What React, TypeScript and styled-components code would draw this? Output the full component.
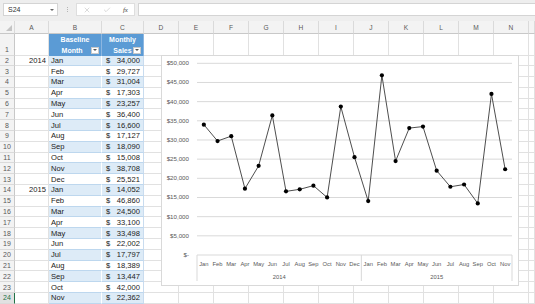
import React from "react";
import styled, { createGlobalStyle, css } from "styled-components";
import { X, Check } from "lucide-react";

const GlobalStyle = createGlobalStyle`
  html, body { margin: 0; padding: 0; background: #fff; overflow: hidden; }
  body { font-family: "Liberation Sans", Arial, sans-serif; }
  * { box-sizing: border-box; }
`;

const Page = styled.div`
  width: 535px;
  height: 304px;
  overflow: hidden;
  display: flex;
  flex-direction: column;
`;

const TopBar = styled.div`
  height: 21px;
  flex: none;
  background: #eeeeee;
  display: flex;
  align-items: flex-start;
  padding: 3px 0 0 3px;
`;

const NameBox = styled.div`
  width: 55px;
  height: 13px;
  background: #fff;
  border: 1px solid #d4d4d4;
  display: flex;
  align-items: center;
  justify-content: space-between;
  padding: 0 3px 0 4px;
  font-size: 7px;
  color: #333;
`;

const Caret = styled.span`
  width: 0;
  height: 0;
  border-left: 2px solid transparent;
  border-right: 2px solid transparent;
  border-top: 2.5px solid #666;
`;

const Dots = styled.div`
  width: 18px;
  height: 13px;
  display: flex;
  flex-direction: column;
  align-items: center;
  justify-content: center;
  gap: 1px;
`;

const Dot = styled.span`
  width: 1px;
  height: 1px;
  background: #b5b5b5;
`;

const FxGroup = styled.div`
  width: 59px;
  height: 13px;
  background: #fff;
  border: 1px solid #dedede;
  display: flex;
  align-items: center;
  justify-content: space-around;
  color: #b4b4b4;
`;

const Fx = styled.span`
  font-family: "Liberation Serif", serif;
  font-style: italic;
  font-size: 7px;
  color: #444;
`;

const FormulaInput = styled.div`
  flex: 1;
  height: 13px;
  margin-left: 3px;
  background: #fff;
  border: 1px solid #d4d4d4;
  border-right: none;
`;

const Sheet = styled.div`
  position: relative;
  flex: 1;
  display: grid;
  grid-template-columns: 15px 34px 53px 42px repeat(11, 35px) 1fr;
  grid-template-rows: 13px 21.5px repeat(23, 10.8px);
  font-size: 7.6px;
  color: #222;
`;

const ColHead = styled.div<{ $corner?: boolean }>`
  position: relative;
  background: #f3f3f3;
  border-right: 1px solid #dadada;
  border-bottom: 1px solid #c8c8c8;
  color: #595959;
  font-size: 6.6px;
  display: flex;
  align-items: center;
  justify-content: center;
  ${(p) =>
    p.$corner &&
    css`
      &::after {
        content: "";
        position: absolute;
        right: 2px;
        bottom: 2px;
        width: 0;
        height: 0;
        border-left: 6px solid transparent;
        border-bottom: 6px solid #c4c4c4;
      }
    `}
`;

const RowHead = styled.div<{ $bottom?: boolean; $active?: boolean }>`
  background: ${(p) => (p.$active ? "#e1e1e1" : "#f3f3f3")};
  border-right: 1px solid ${(p) => (p.$active ? "#217346" : "#c8c8c8")};
  border-bottom: 1px solid #dadada;
  color: ${(p) => (p.$active ? "#217346" : "#595959")};
  font-size: 7px;
  display: flex;
  justify-content: center;
  align-items: ${(p) => (p.$bottom ? "flex-end" : "center")};
  padding-bottom: ${(p) => (p.$bottom ? "2px" : "0")};
`;

const Cell = styled.div<{ $right?: boolean }>`
  background: #fff;
  border-right: 1px solid #e1e1e1;
  border-bottom: 1px solid #e1e1e1;
  display: flex;
  align-items: center;
  justify-content: ${(p) => (p.$right ? "flex-end" : "flex-start")};
  padding: 0 2px;
  white-space: nowrap;
  overflow: hidden;
`;

const TableHead = styled.div`
  position: relative;
  background: #5b9bd5;
  border-right: 1px solid #8cb6e0;
  color: #fff;
  font-weight: bold;
  font-size: 7px;
  line-height: 11px;
  display: flex;
  flex-direction: column;
  justify-content: flex-end;
  align-items: center;
  padding-bottom: 0;
`;

const FilterButton = styled.span`
  position: absolute;
  right: 2px;
  bottom: 2px;
  width: 8px;
  height: 7px;
  background: #fff;
  border: 1px solid #c9c9c9;
  display: flex;
  align-items: center;
  justify-content: center;
  &::after {
    content: "";
    width: 0;
    height: 0;
    border-left: 2px solid transparent;
    border-right: 2px solid transparent;
    border-top: 2px solid #555;
  }
`;

const DataCell = styled.div<{ $band: boolean; $money?: boolean }>`
  background: ${(p) => (p.$band ? "#ddebf7" : "#fff")};
  border-bottom: 1px solid #bdd7ee;
  border-right: 1px solid ${(p) => (p.$money ? "#c9dcef" : "#fff")};
  display: flex;
  align-items: center;
  justify-content: ${(p) => (p.$money ? "space-between" : "flex-start")};
  padding: ${(p) => (p.$money ? "0 3px 0 4px" : "0 2px")};
  white-space: nowrap;
  overflow: hidden;
`;

const ChartBox = styled.div`
  position: absolute;
  left: 161px;
  top: 34px;
  width: 358px;
  height: 231px;
  background: #fff;
  border: 1px solid #d9d9d9;
`;

const ChartSvg = styled.svg`
  display: block;
  font-family: "Liberation Sans", Arial, sans-serif;
`;

const months = ["Jan", "Feb", "Mar", "Apr", "May", "Jun", "Jul", "Aug", "Sep", "Oct", "Nov", "Dec"];
const values = [
  34000, 29727, 31004, 17303, 23257, 36400, 16600, 17127, 18090, 15008, 38708, 25521,
  14052, 46860, 24500, 33100, 33498, 22002, 17797, 18389, 13447, 42000, 22362,
];
const letters = ["A", "B", "C", "D", "E", "F", "G", "H", "I", "J", "K", "L", "M", "N", ""];

const fmt = (n: number) => n.toLocaleString("en-US");

const Chart: React.FC = () => {
  const left = 35;
  const right = 350;
  const y0 = 199;
  const step = 19.17;
  const cw = (right - left) / values.length;
  const yOf = (v: number) => y0 - (v / 5000) * step;
  const xOf = (i: number) => left + cw * (i + 0.5);
  const ticks = Array.from({ length: 11 }, (_, i) => i * 5000);
  const pts = values.map((v, i) => `${xOf(i).toFixed(2)},${yOf(v).toFixed(2)}`).join(" ");
  const cats = values.map((_, i) => months[i % 12]);
  const split = left + cw * 12;
  return (
    <ChartSvg width={356} height={229} viewBox="0 0 356 229">
      {ticks.map((t) => (
        <g key={t}>
          <line x1={left} x2={right} y1={yOf(t)} y2={yOf(t)} stroke="#d9d9d9" strokeWidth={1} />
          <text x={27} y={yOf(t) + 2} fontSize={6.2} fill="#595959" textAnchor="end">
            {t === 0 ? "$-" : `$${fmt(t)}`}
          </text>
        </g>
      ))}
      {[left, split, right].map((x) => (
        <line key={x} x1={x} x2={x} y1={y0} y2={225} stroke="#d9d9d9" strokeWidth={1} />
      ))}
      {cats.map((c, i) => (
        <text key={i} x={xOf(i)} y={209.8} fontSize={5.8} fill="#595959" textAnchor="middle">
          {c}
        </text>
      ))}
      <text x={(left + split) / 2} y={223} fontSize={5.8} fill="#595959" textAnchor="middle">
        2014
      </text>
      <text x={(split + right) / 2} y={223} fontSize={5.8} fill="#595959" textAnchor="middle">
        2015
      </text>
      <polyline points={pts} fill="none" stroke="#3a3a3a" strokeWidth={0.9} />
      {values.map((v, i) => (
        <circle key={i} cx={xOf(i)} cy={yOf(v)} r={2.1} fill="#000" />
      ))}
    </ChartSvg>
  );
};

const App: React.FC = () => {
  const emptyTail = (row: number) =>
    Array.from({ length: 12 }, (_, k) => <Cell key={`e${row}-${k}`} />);

  return (
    <Page>
      <GlobalStyle />
      <TopBar>
        <NameBox>
          <span>S24</span>
          <Caret />
        </NameBox>
        <Dots>
          <Dot />
          <Dot />
          <Dot />
        </Dots>
        <FxGroup>
          <X size={8} strokeWidth={1.5} />
          <Check size={8} strokeWidth={1.5} />
          <Fx>fx</Fx>
        </FxGroup>
        <FormulaInput />
      </TopBar>
      <Sheet>
        <ColHead $corner />
        {letters.map((l, i) => (
          <ColHead key={i}>{l}</ColHead>
        ))}

        <RowHead $bottom>1</RowHead>
        <Cell />
        <TableHead>
          <span>Baseline</span>
          <span>Month&nbsp;&nbsp;&nbsp;</span>
          <FilterButton />
        </TableHead>
        <TableHead>
          <span>Monthly</span>
          <span>Sales</span>
          <FilterButton />
        </TableHead>
        {emptyTail(1)}

        {values.map((v, i) => {
          const row = i + 2;
          const band = i % 2 === 0;
          return (
            <React.Fragment key={row}>
              <RowHead $active={row === 24}>{row}</RowHead>
              <Cell $right>{i === 0 ? "2014" : i === 12 ? "2015" : ""}</Cell>
              <DataCell $band={band}>{months[i % 12]}</DataCell>
              <DataCell $band={band} $money>
                <span>$</span>
                <span>{fmt(v)}</span>
              </DataCell>
              {emptyTail(row)}
            </React.Fragment>
          );
        })}
        <ChartBox>
          <Chart />
        </ChartBox>
      </Sheet>
    </Page>
  );
};

export default App;
